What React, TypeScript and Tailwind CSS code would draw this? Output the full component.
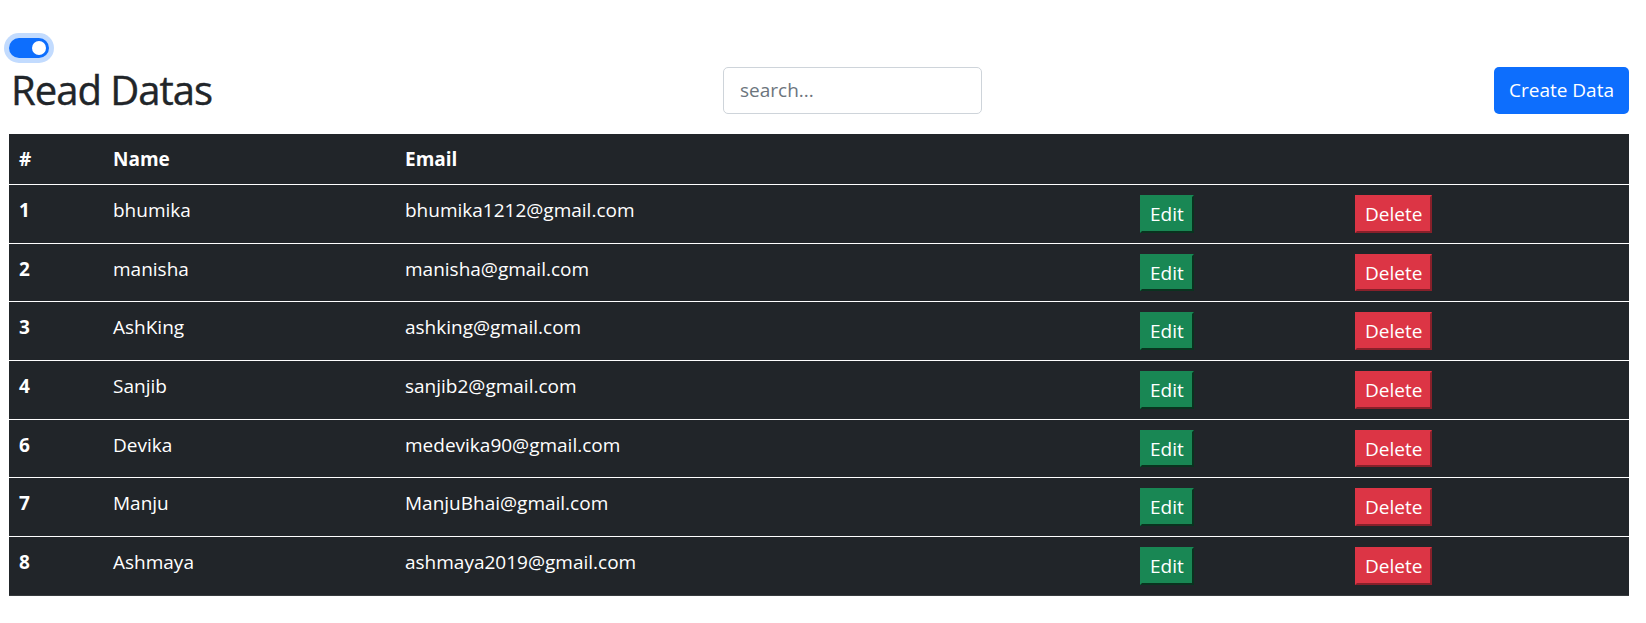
import React from 'react';

type Row = { id: number; name: string; email: string };

const rows: Row[] = [
  { id: 1, name: 'bhumika', email: 'bhumika1212@gmail.com' },
  { id: 2, name: 'manisha', email: 'manisha@gmail.com' },
  { id: 3, name: 'AshKing', email: 'ashking@gmail.com' },
  { id: 4, name: 'Sanjib', email: 'sanjib2@gmail.com' },
  { id: 6, name: 'Devika', email: 'medevika90@gmail.com' },
  { id: 7, name: 'Manju', email: 'ManjuBhai@gmail.com' },
  { id: 8, name: 'Ashmaya', email: 'ashmaya2019@gmail.com' },
];

export default function App() {
  return (
    <div
      className="min-h-screen bg-white text-[#212529] text-[19px] leading-[30px]"
      style={{ fontFamily: '"Open Sans", "Noto Sans", sans-serif' }}
    >
      <div className="w-[1620px] ml-[9px] pt-[33px]">
        {/* theme switch */}
        <div className="h-[29px] flex items-center">
          <div className="w-[40px] h-[20px] rounded-full bg-[#0d6efd] shadow-[0_0_0_5px_rgba(13,110,253,0.25)] flex items-center justify-end pr-[3px]">
            <span className="w-[14px] h-[14px] rounded-full bg-white" />
          </div>
        </div>

        <div className="flex items-center justify-between mt-[4px]">
          <h2 className="w-[202px] shrink-0 whitespace-nowrap text-[40px] leading-[48px] font-normal m-0 tracking-[-1px] pl-[2px] [-webkit-text-stroke:0.4px_#212529]">
            Read Datas
          </h2>
          <input
            type="text"
            placeholder="search..."
            className="w-[259px] h-[47px] shrink-0 border border-[#ced4da] rounded-[5px] px-[16px] text-[19px] outline-none placeholder:text-[#6c757d]"
          />
          <button className="w-[135px] h-[47px] shrink-0 whitespace-nowrap rounded-[5px] bg-[#0d6efd] text-white text-[19px]">
            Create Data
          </button>
        </div>

        <table className="w-full mt-[20px] bg-[#212529] text-white border-collapse">
          <thead>
            <tr className="border-b border-white">
              <th className="w-[94px] h-[50px] text-left font-bold px-[10px] py-[10px] align-top">#</th>
              <th className="w-[292px] text-left font-bold px-[10px] py-[10px] align-top">Name</th>
              <th className="w-[735px] text-left font-bold px-[10px] py-[10px] align-top">Email</th>
              <th className="w-[215px] px-[10px] py-[10px]"></th>
              <th className="px-[10px] py-[10px]"></th>
            </tr>
          </thead>
          <tbody>
            {rows.map((r, i) => (
              <tr
                key={r.id}
                className={i === rows.length - 1 ? 'border-b border-[#373b3e]' : 'border-b border-white'}
              >
                <td className="px-[10px] py-[10px] align-top font-bold">{r.id}</td>
                <td className="px-[10px] py-[10px] align-top">{r.name}</td>
                <td className="px-[10px] py-[10px] align-top">{r.email}</td>
                <td className="px-[10px] py-[10px] align-top">
                  <button className="h-[37.7px] bg-[#198754] text-white border-2 border-[#198754] [border-style:outset] px-[8px] leading-[30px]">
                    Edit
                  </button>
                </td>
                <td className="px-[10px] py-[10px] align-top">
                  <button className="h-[37.7px] bg-[#dc3545] text-white border-2 border-[#dc3545] [border-style:outset] px-[8px] leading-[30px]">
                    Delete
                  </button>
                </td>
              </tr>
            ))}
          </tbody>
        </table>
      </div>
    </div>
  );
}
